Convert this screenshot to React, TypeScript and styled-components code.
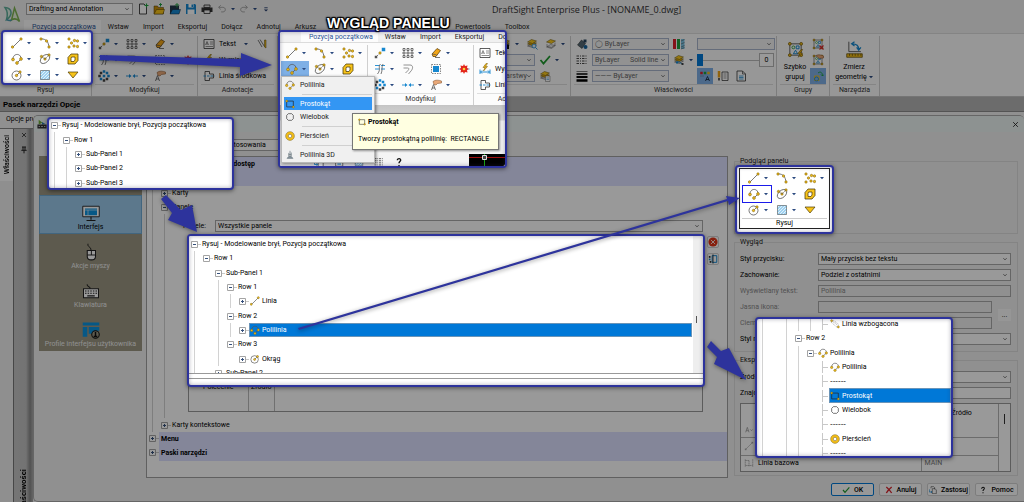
import React from "react";
import styled, { createGlobalStyle, css } from "styled-components";

const GlobalStyle = createGlobalStyle`
  *, *::before, *::after { box-sizing: border-box; }
  body { margin: 0; background: #999; }
  body, button, input, select, table {
    font-family: Roboto, "Open Sans", sans-serif;
    font-size: 7px;
    line-height: 10px;
    color: #000;
  }
  button, input, select { margin: 0; padding: 0; border: 0; background: none; border-radius: 0; }
`;

/* ---------- icons ---------- */

const Svg = styled.svg<{ $size: number }>`
  display: block;
  flex: none;
  width: ${(p) => p.$size}px;
  height: ${(p) => p.$size}px;
`;

const Dot = ({ x, y, r = 2.4 }: { x: number; y: number; r?: number }) => (
  <circle cx={x} cy={y} r={r} fill="#f2bd18" stroke="#7d6210" strokeWidth="1.1" />
);
const Sq = ({ x, y, c = "#1687cf", s = 5 }: { x: number; y: number; c?: string; s?: number }) => (
  <rect x={x - s / 2} y={y - s / 2} width={s} height={s} fill={c} />
);
const ink = { fill: "none", stroke: "#555", strokeWidth: 1.6 } as const;
const sky = { fill: "none", stroke: "#1687cf", strokeWidth: 1.8 } as const;

const stack = (
  <>
    <path d="M3 16l8-4 10 2-8 5z" fill="#c9c9c9" stroke="#555" />
    <path d="M3 12l8-4 10 2-8 5z" fill="#e0a90c" stroke="#5d4a08" />
    <path d="M3 8l8-5 10 3-8 5z" fill="#f7c71e" stroke="#5d4a08" />
  </>
);

const groupBox = (
  <>
    <path d="M4 4h16v16H4z" fill="none" stroke="#555" strokeWidth="1.3" />
    <Dot x={4} y={4} r={2} /><Dot x={20} y={4} r={2} /><Dot x={4} y={20} r={2} /><Dot x={20} y={20} r={2} />
    <circle cx="9" cy="9" r="2" fill="none" stroke="#2d9c3c" strokeWidth="1.3" />
    <path d="M13 7h4v4h-4zM12 13l3 5H9z" {...sky} strokeWidth={1.4} />
  </>
);

const glyphs: Record<string, React.ReactNode> = {
  line: <><path d="M4 20L20 4" {...ink} /><Dot x={3} y={20} /><Dot x={20} y={4} /></>,
  arc: <><path d="M4 4c10-1 15 6 16 16" {...ink} /><Dot x={4} y={4} /><Dot x={15} y={8} /><Dot x={20} y={20} /></>,
  points: <><Dot x={4} y={4} /><Dot x={4} y={20} /><Dot x={9} y={12} /><Dot x={15} y={7} /><Dot x={21} y={8} /><Dot x={14} y={18} /><Dot x={21} y={19} /></>,
  polyline: <><path d="M4 12C4 0 20 0 20 11M20 12l-8 8" {...ink} /><Dot x={4} y={13} r={2.8} /><Dot x={20} y={12} r={2.8} /><Dot x={12} y={20} r={2.8} /></>,
  ellipse: <><ellipse cx="12" cy="12" rx="11" ry="7" transform="rotate(-42 12 12)" {...ink} /><Dot x={12} y={12} /><Dot x={5} y={7} /><Dot x={20} y={4} /><path d="M5 7l7 5 8-8" {...ink} strokeWidth={1} /></>,
  region: <><path d="M8 2h14v13l-6 7H2V9z" fill="#f7c31a" stroke="#4a3a05" strokeWidth="1.5" /><path d="M9 8h7v6l-2 3H8v-6z" fill="#fff" stroke="#4a3a05" strokeWidth="1.5" /></>,
  circle: <><circle cx="11" cy="13" r="9" {...ink} /><path d="M11 13l7-7" {...ink} /><Dot x={11} y={13} /><Dot x={18} y={6} /></>,
  hatch: <><path d="M3 3h18v18H3z" fill="#dff1fc" stroke="#555" strokeWidth="1.3" /><path d="M3 10l7-7M3 16L16 3M4 21L21 4M10 21l11-11M16 21l5-5" stroke="#2a97d8" strokeWidth="1.4" /></>,
  triangle: <path d="M2 6h20L12 18z" fill="#f7c31a" stroke="#4a3a05" strokeWidth="1.4" />,
  rect: <><path d="M4 5h16v14H4z" {...ink} stroke="#222" /><Dot x={4} y={5} /><Dot x={20} y={19} /></>,
  polygon: <path d="M8 4h8l4 4v8l-4 4H8l-4-4V8z" {...ink} stroke="#333" />,
  ring: <><circle cx="12" cy="12" r="7.5" fill="none" stroke="#f2bd18" strokeWidth="6" /><circle cx="12" cy="12" r="10.6" fill="none" stroke="#6a5208" /><circle cx="12" cy="12" r="4.2" fill="#fff" stroke="#6a5208" strokeWidth="1.3" /></>,
  poly3d: <path d="M12 2v14M9 7v9M15 6v10M5 20l4-4h6l4 4zM9 11h6" fill="#8a99a3" stroke="#5d6c76" strokeWidth="1.6" />,
  rich: <><path d="M3 3l18 14M3 8l14 12M8 3l13 10" stroke="#777" strokeWidth="1.2" strokeDasharray="3 2" /><Dot x={4} y={4} /><Dot x={20} y={19} /></>,
  stretch: <><path d="M5 19L19 5" {...ink} stroke="#555" strokeDasharray="5 3" /><Dot x={12} y={12} /><Sq x={4} y={20} c="#555" /><Sq x={19} y={5} s={7} /></>,
  array: <path d="M2 3h4v4H2zM10 3h4v4h-4zM18 3h4v4h-4zM2 10h4v4H2zM10 10h4v4h-4zM18 10h4v4h-4zM2 17h4v4H2zM10 17h4v4h-4zM18 17h4v4h-4z" {...ink} stroke="#444" strokeWidth={1.5} />,
  erase: <><path d="M4 14L14 3l7 4-9 12H6z" fill="#f2a618" stroke="#4a3208" strokeWidth="1.4" /><path d="M4 14l7 1 3 2" {...ink} /><path d="M10 21h10" {...ink} /></>,
  trim: <><path d="M2 5h9M14 5h8M2 12h9M14 12h8" {...sky} /><path d="M13 2C7 8 15 12 7 22M18 2c-4 8 0 11-4 20" {...ink} /></>,
  offset: <path d="M3 4h13c7 0 6 8 2 12l-5 6M3 10h8c4 0 3 3 0 6l-4 4" {...ink} stroke="#777" />,
  copy: <><path d="M3 3h18v18H3z" fill="none" stroke="#555" strokeWidth="1.4" strokeDasharray="3 2" /><path d="M6 6h12v12H6z" fill="#1687cf" /></>,
  explode: <><path d="M0 12h6M18 12h6" {...sky} strokeDasharray="3 2" /><path d="M12 2l2 4 5-1-1 5 4 2-4 2 1 5-5-1-2 4-2-4-5 1 1-5-4-2 4-2-1-5 5 1z" fill="#e3261b" /><circle cx="12" cy="12" r="2.6" fill="#fbd13a" /></>,
  pattern: <><Sq x={12} y={3} /><Sq x={12} y={21} c="#444" /><Sq x={3} y={12} c="#444" /><Sq x={21} y={12} /><Sq x={12} y={12} /><Sq x={6} y={6} c="#444" /><Sq x={18} y={6} /><Sq x={6} y={18} /><Sq x={18} y={18} c="#444" /></>,
  merge: <><path d="M0 12h8M16 12h8" {...sky} /><path d="M6 8l5 4-5 4zM18 8l-5 4 5 4z" fill="#1687cf" /></>,
  edit: <><path d="M6 5c5-4 11-3 17-1v4l-8 1-3 3-4-1z" fill="#e9a878" stroke="#7c4a22" /><path d="M3 22l4-11 4 11M4 18h6" {...ink} /></>,
  text: <><path d="M2 3h20v18H2z" fill="#fff" stroke="#333" strokeWidth="1.6" /><path d="M5 14l3-7 3 7M6 12h4M14 8h6M14 12h6M5 17h15" {...ink} strokeWidth={1.3} /></>,
  dim: <><path d="M14 1L8 9h4l-3 7 8-9h-4l4-6z" fill="#f5b915" stroke="#6a5208" /><path d="M2 13v9M22 13v9M3 18h18M6 15l-3 3 3 3M18 15l3 3-3 3" {...sky} /></>,
  center: <><path d="M4 3h9v5M4 21h9v-5M4 3v18M13 8h8v8h-8" {...ink} stroke="#333" /><path d="M1 12h22" {...sky} strokeDasharray="5 2" /></>,
  pencil: <><path d="M4 4l8 14M8 3l9 14" stroke="#777" strokeWidth="2" /><path d="M17 4v14l3 2V4z" fill="#f2bd18" stroke="#5d4a08" /></>,
  layersPlain: <><path d="M3 18l8-5 10 2-8 6z" fill="#e4e4e4" stroke="#666" /><path d="M3 8l8-5 10 3-8 5z" fill="#f7c71e" stroke="#5d4a08" /><path d="M4 12v5l9 2 7-5v-5" {...ink} strokeWidth={1} /></>,
  layersFind: <>{stack}<circle cx="16" cy="16" r="4" fill="#dff1fc" stroke="#1687cf" strokeWidth="1.6" /><path d="M19 19l4 4" {...sky} /></>,
  layersNode: <>{stack}<path d="M8 16h5l5 4" {...sky} /><Sq x={8} y={17} s={4} /><Sq x={19} y={20} s={4} c="#444" /></>,
  layersPage: <>{stack}<path d="M13 12h9v11h-9z" fill="#fff" stroke="#666" /><path d="M15 16h5M15 19h5" stroke="#1687cf" /></>,
  layersDark: <>{stack}<path d="M9 13h11v9H9z" fill="#111" /></>,
  check: <path d="M3 12l6 7L22 4" fill="none" stroke="#1e9a2e" strokeWidth="3.6" />,
  fill: <><path d="M3 14l8-10 8 7-7 10z" fill="#556a75" stroke="#222" /><circle cx="19" cy="18" r="4" fill="#16639c" /><Sq x={18} y={6} c="#28445c" s={6} /></>,
  dashes: <path d="M1 4h22M1 9h22M1 14h22M1 19h22" stroke="#333" strokeWidth="1.8" strokeDasharray="5 2 2 2" />,
  weights: <><path d="M1 3h22" stroke="#000" /><path d="M1 8h22" stroke="#000" strokeWidth="3" /><path d="M1 14h22" stroke="#000" strokeWidth="4" /><path d="M1 21h22" stroke="#000" strokeWidth="5" /></>,
  swatches: <><path d="M0 2h6v20H0z" fill="#dc1f2c" /><path d="M8 2h6v20H8z" fill="#1ea03e" /><path d="M16 2h7v20h-7z" fill="#7ec8e8" /><path d="M16 6l7-3M16 12l7-3M16 18l7-3M16 22l7-3" stroke="#444" /></>,
  colorA: <><Sq x={5} y={6} c="#dc1f2c" /><Sq x={12} y={6} c="#1ea03e" /><Sq x={19} y={6} c="#f2bd18" /><path d="M13 22l4-9 4 9M14 19h6" {...ink} stroke="#123" /><path d="M3 12h7" {...ink} strokeDasharray="2 2" /></>,
  brush: <><path d="M4 2v13" stroke="#f2a618" strokeWidth="5" /><path d="M4 16v5" stroke="#333" strokeWidth="3" /><path d="M10 4h12v17H10z" fill="#fff" stroke="#333" strokeWidth="1.5" /><path d="M13 8h6M13 12h6M13 16h6" stroke="#333" /></>,
  page: <><path d="M4 2h11l6 6v14H4z" fill="#fff" stroke="#333" strokeWidth="1.6" /><path d="M15 2v6h6" {...ink} /><path d="M8 12h9M8 15h9M8 18h9" stroke="#1687cf" strokeWidth="1.5" /></>,
  group: <>{groupBox}<path d="M20 12l-5 6h3l-2 5 6-6h-3l3-5z" fill="#f5b915" stroke="#6a5208" strokeWidth=".8" /></>,
  ungroup: <>{groupBox}<path d="M15 15l8 8M23 15l-8 8" stroke="#d9242c" strokeWidth="2.2" /></>,
  groupEdit: <>{groupBox}<path d="M8 3c5-3 10-1 15 1v4l-9 1z" fill="#e9a878" stroke="#7c4a22" /></>,
  groupPick: <><path d="M5 12h9v9H5z" fill="none" stroke="#f2bd18" strokeWidth="2" /><circle cx="9" cy="18" r="4" fill="none" stroke="#1687cf" strokeWidth="1.6" /><path d="M12 6c5-4 9-1 9 6M18 9l3 3 3-3" fill="none" stroke="#1ea03e" strokeWidth="1.8" /></>,
  measure: <><path d="M4 1v14h17" {...ink} strokeWidth={1.3} /><path d="M9 4c6 0 9 3 9 8M12 1L8 4l4 3M15 9l3 4 3-4" {...sky} /><path d="M1 18h22v5H1z" fill="#f2bd18" stroke="#5d4a08" /><path d="M5 18v3M9 18v3M13 18v3M17 18v3M21 18v3" stroke="#5d4a08" /></>,
  newFile: <><path d="M5 2h9l5 5v15H5z" fill="#fff" stroke="#333" strokeWidth="1.8" /><path d="M19 1v8M15 5h8" stroke="#1ea03e" strokeWidth="2.2" /></>,
  open: <><path d="M2 6h7l2 3h10v13H2z" fill="#c98f0a" stroke="#4a3a05" /><path d="M2 22l5-9h16l-3 9z" fill="#f7c31a" stroke="#4a3a05" /><path d="M15 7V1M12 4l3-3 3 3" stroke="#1ea03e" strokeWidth="2" fill="none" /></>,
  openBlue: <><path d="M2 5h18v17H2z" fill="#22384a" /><path d="M2 22l5-9h16l-3 9z" fill="#1687cf" stroke="#123" /><path d="M16 9V2M12 5l4-4 4 4" stroke="#1ea03e" strokeWidth="2" fill="none" /></>,
  save: <><path d="M2 2h18l2 2v18H2z" fill="#1687cf" /><path d="M7 2h10v7H7zM5 13h14v9H5z" fill="#fff" /><path d="M13 3h3v5h-3z" fill="#1687cf" /></>,
  print: <><path d="M6 4h12v5H6z" fill="#ddd" stroke="#222" strokeWidth="1.5" /><path d="M1 9h22v9H1z" fill="#333" /><path d="M6 14h12v7H6z" fill="#eee" stroke="#222" strokeWidth="1.5" /></>,
  undo: <path d="M9 3L4 8l5 5M4 8h10c8 0 8 11 0 11h-4" fill="none" stroke="#999" strokeWidth="2" />,
  redo: <path d="M15 3l5 5-5 5M20 8H10c-8 0-8 11 0 11h4" fill="none" stroke="#999" strokeWidth="2" />,
  more: <><path d="M8 9h8" stroke="#223a6a" strokeWidth="2" /><path d="M7 13h10l-5 5z" fill="#223a6a" /></>,
  appSmall: <><path d="M4 2l9 7-9 4z" fill="#6fae3a" /><path d="M12 7l8 5-8 2z" fill="#2d7cae" /><path d="M1 13h22v10H1z" fill="#333" /><path d="M4 18h3M10 18h4M17 18h3" stroke="#ddd" strokeWidth="2" /></>,
  monitor: <><path d="M1 3h22v14H1z" fill="#fff" stroke="#222" strokeWidth="1.2" /><path d="M4 6h16v9H4z" fill="#0a93e0" /><path d="M4 8h16M8 8v7" stroke="#fff" strokeWidth=".8" /><path d="M12 17v4M6 22h12" stroke="#222" strokeWidth="1.5" /></>,
  mouse: <><path d="M7 10h11v8c0 6-11 6-11 0z" fill="#fff" stroke="#222" strokeWidth="1.4" /><path d="M12.500 10v6M7 16h11M12 10C12 4 7 6 8 1" fill="none" stroke="#222" strokeWidth="1.3" /></>,
  keyboard: <><path d="M2 9h20v12H2z" fill="#fff" stroke="#222" strokeWidth="1.4" /><path d="M4 12h16M4 15h16" stroke="#222" strokeWidth="1.6" strokeDasharray="2 1.500" /><path d="M7 18.500h10M11 9c0-4-5-2-4-6" fill="none" stroke="#222" strokeWidth="1.4" /></>,
  profile: <><path d="M1 2h22v4H1zM1 8h6v13H1zM9 8h14v5c-6 0-8 2-9 4H9z" fill="#0a93e0" /><circle cx="18" cy="18" r="5" fill="#9b9682" stroke="#111" strokeWidth="1.4" /><path d="M18 14.500v5M15.500 20.500h5" stroke="#111" strokeWidth="2" /></>,
  remove: <><circle cx="12" cy="12" r="11" fill="#e03418" /><path d="M7 7l10 10M17 7L7 17" stroke="#fff" strokeWidth="2" /></>,
  rename: <><path d="M10 4h11v16H10z" fill="none" stroke="#1687cf" strokeWidth="2.4" /><path d="M12 1v22" stroke="#222" strokeWidth="2" /><Sq x={4} y={7} c="#222" s={4} /><Sq x={4} y={13} c="#1687cf" s={4} /><Sq x={6} y={19} c="#222" s={4} /></>,
  close: <path d="M4 4l16 16M20 4L4 20" stroke="#222" strokeWidth="3" />,
  pin: <path d="M6 3h12M9 3v9M15 3v9M4 13h16M12 13v9" fill="none" stroke="#222" strokeWidth="3" />,
  cancel: <path d="M4 3c5 4 12 12 16 18M20 3C14 8 8 14 4 21" fill="none" stroke="#d9242c" strokeWidth="4" />,
  apply: <><path d="M6 7V2h8l3 3v5M10 8h8l4 4v11H10z" fill="#fff" stroke="#333" strokeWidth="1.6" /><path d="M1 10v8h8M6 15l3 3-3 3" fill="none" stroke="#1687cf" strokeWidth="2" /></>,
  help: <path d="M8 8c0-6 9-5 8 0-1 3-4 3-4 7M12 19v3" fill="none" stroke="#111" strokeWidth="3.2" />,
  letter: <path d="M4 20L8 8l4 12M5 16h6M15 13l3 3 3-3" fill="none" stroke="#999" strokeWidth="1.8" />,
  baseline: <path d="M3 3v18M12 6v15M21 3v18M3 6h9M3 18h18" fill="none" stroke="#999" strokeWidth="1.6" strokeDasharray="4 1" />,
  faintLine: <><path d="M5 19L19 5" stroke="#aaa" strokeWidth="1.6" /><Sq x={4} y={20} c="#aaa" s={4} /><Sq x={20} y={4} c="#aaa" s={4} /></>,
  chevron: <path d="M5 8l7 8 7-8" fill="none" stroke="#555" strokeWidth="2.6" />,
};

const Icon = ({ name, size = 12 }: { name: string; size?: number }) => (
  <Svg $size={size} viewBox="0 0 24 24" aria-hidden="true">{glyphs[name]}</Svg>
);

const Caret = () => (
  <Svg $size={4} viewBox="0 0 8 8" aria-hidden="true"><path d="M0 2h8L4 6.500z" fill="#2b4a80" /></Svg>
);

/* ---------- shared controls ---------- */

const SelectBox = styled.span<{ $w?: number; $tint?: boolean; $muted?: boolean }>`
  display: grid;
  grid-template-columns: minmax(0, 1fr) 10px;
  align-items: center;
  height: 12px;
  width: ${(p) => (p.$w ? `${p.$w}px` : "100%")};
  border: 1px solid ${(p) => (p.$tint ? "#a9b4cc" : "#a8a8a8")};
  background: ${(p) => (p.$muted ? "#f4f4f4" : "#fff")};
  select {
    grid-area: 1 / 1 / 2 / 3;
    appearance: none;
    width: 100%;
    height: 10px;
    padding-left: 2px;
    color: ${(p) => (p.$muted ? "#666" : "#000")};
    opacity: 1;
  }
  svg { grid-area: 1 / 2; justify-self: center; pointer-events: none; }
`;

type SelectProps = { label: string; value: string; w?: number; tint?: boolean; muted?: boolean; id?: string };
const Select = ({ label, value, w, tint, muted, id }: SelectProps) => (
  <SelectBox $w={w} $tint={tint} $muted={muted}>
    <select aria-label={label} id={id} defaultValue={value}><option>{value}</option></select>
    <Icon name="chevron" size={6} />
  </SelectBox>
);

type Hot = "fill" | "open" | "frame";
const ToolButton = styled.button<{ $hot?: Hot }>`
  display: flex;
  align-items: center;
  gap: 4px;
  height: 16px;
  padding: 0 2px;
  white-space: nowrap;
  ${(p) => (p.$hot === "fill" || p.$hot === "open") && css`background: #7fb0e6;`}
  ${(p) => (p.$hot === "open" || p.$hot === "frame") && css`width: 28px; margin-left: -3px; padding-left: 5px;`}
  ${(p) => p.$hot === "frame" && css`box-shadow: 0 0 0 1px #1b1bea;`}
`;

type ToolProps = { icon: string; caret?: boolean; text?: string; hot?: Hot };
const Tool = ({ icon, caret, text, hot }: ToolProps) => (
  <ToolButton type="button" aria-label={text ?? icon} $hot={hot}>
    <Icon name={icon} />{text}{caret && <Caret />}
  </ToolButton>
);

const ToolGrid = styled.div<{ $cols: number }>`
  display: grid;
  grid-template-columns: repeat(${(p) => p.$cols}, 28px);
  grid-auto-rows: 16px;
  justify-items: start;
`;

const DrawTools = ({ active }: { active?: Hot }) => (
  <ToolGrid $cols={3}>
    <Tool icon="line" caret /><Tool icon="arc" caret /><Tool icon="points" caret />
    <Tool icon="polyline" caret hot={active} /><Tool icon="ellipse" caret /><Tool icon="region" />
    <Tool icon="circle" caret /><Tool icon="hatch" caret /><Tool icon="triangle" />
  </ToolGrid>
);

const ModifyTools = () => (
  <ToolGrid $cols={4}>
    <Tool icon="stretch" caret /><Tool icon="array" caret /><Tool icon="erase" caret /><span />
    <Tool icon="trim" caret /><Tool icon="offset" /><Tool icon="copy" /><Tool icon="explode" />
    <Tool icon="pattern" caret /><Tool icon="merge" caret /><Tool icon="edit" caret />
  </ToolGrid>
);

const Column = styled.div`display: flex; flex-direction: column; align-items: flex-start;`;
const Line = styled.div<{ $gap?: number }>`
  display: flex;
  align-items: center;
  height: 16px;
  gap: ${(p) => p.$gap ?? 0}px;
`;

const NoteTools = () => (
  <Column>
    <Line $gap={6}><Tool icon="text" text="Tekst" /><Caret /><Tool icon="pencil" /></Line>
    <Tool icon="dim" text="Wymiar" />
    <Tool icon="center" text="Linia środkowa" />
  </Column>
);

/* ---------- window top ---------- */

const Desktop = styled.div`
  position: relative;
  display: flex;
  flex-direction: column;
  height: 100vh;
  overflow: hidden;
  background: #f0f0f0;
`;

const TitleBar = styled.header`
  display: flex;
  align-items: center;
  height: 20px;
  padding: 0 0 3px 26px;
  gap: 4px;
`;
const Mark = styled.div`position: absolute; left: 3px; top: 5px;`;
const DocTitle = styled.h1`
  margin: 0 0 0 217px;
  font-family: "Open Sans", sans-serif;
  font-size: 9px;
  line-height: 12px;
  font-weight: 400;
  color: #333;
  white-space: nowrap;
  padding-top: 3px;
`;

const TabRow = styled.nav<{ $inset?: number; $low?: boolean }>`
  flex: none;
  display: flex;
  height: ${(p) => (p.$low ? 10 : 13)}px;
  padding-left: ${(p) => p.$inset ?? 24}px;
  white-space: nowrap;
`;
const Tab = styled.button<{ $on?: boolean }>`
  flex: none;
  padding: ${(p) => (p.$on ? "0 5px 0 8px" : "0 7px")};
  line-height: 10px;
  color: ${(p) => (p.$on ? "#2c5596" : "#222")};
  background: ${(p) => (p.$on ? "#fcfcfc" : "transparent")};
`;
const TabGap = styled.span`flex: none; width: 125px;`;

const RibbonBar = styled.section`
  flex: none;
  display: flex;
  height: 64px;
  padding-top: 2px;
  background: #fcfcfc;
  border-top: 1px solid #dcdcdc;
  border-bottom: 1px solid #c4c4c4;
`;
const Group = styled.div<{ $w: number }>`
  flex: none;
  display: flex;
  flex-direction: column;
  justify-content: space-between;
  width: ${(p) => p.$w}px;
  padding: 0 3px;
  border-right: 1px solid #cfcfcf;
`;
const GroupBody = styled.div<{ $end?: boolean; $gap?: number; $pad?: number }>`
  display: flex;
  justify-content: ${(p) => (p.$end ? "flex-end" : "flex-start")};
  gap: ${(p) => p.$gap ?? 0}px;
  height: 48px;
  padding-left: ${(p) => p.$pad ?? 0}px;
`;
const GroupName = styled.div`
  border-top: 1px solid #dedede;
  text-align: center;
  height: 12px;
  color: #333;
`;
const BigButton = styled.button`
  display: flex;
  flex-direction: column;
  align-items: center;
  padding-top: 5px;
  width: 36px;
  > svg { margin-bottom: 4px; }
`;
const Inline = styled.span`display: flex; align-items: center; gap: 2px;`;
const LevelSlider = styled.input`
  appearance: none;
  width: 62px;
  height: 12px;
  background: linear-gradient(#bbb, #bbb) center / 100% 1px no-repeat;
  &::-webkit-slider-thumb { appearance: none; width: 6px; height: 12px; background: #0078d7; }
`;
const LevelValue = styled.output`
  width: 15px;
  height: 14px;
  border: 1px solid #b4b4b4;
  background: #fff;
  text-align: center;
  line-height: 12px;
`;

const Ribbon = () => (
  <RibbonBar>
    <Group $w={92}><GroupBody /><GroupName>Rysuj</GroupName></Group>
    <Group $w={106}><GroupBody $pad={1}><ModifyTools /></GroupBody><GroupName>Modyfikuj</GroupName></Group>
    <Group $w={80}><GroupBody><NoteTools /></GroupBody><GroupName>Adnotacje</GroupName></Group>
    <Group $w={293}>
      <GroupBody $end>
        <Column>
          <Line $gap={3}><Tool icon="layersDark" caret /><Tool icon="layersFind" /><Tool icon="layersPlain" caret /></Line>
          <Line $gap={2}><Select label="Stan warstwy" value="" w={38} tint muted /><Tool icon="check" caret /></Line>
          <Line $gap={2}><Select label="Warstwa" value="Warstwy" w={38} tint muted /><Tool icon="layersPage" /></Line>
        </Column>
      </GroupBody>
      <GroupName>Warstwy</GroupName>
    </Group>
    <Group $w={206}>
      <GroupBody $gap={2}>
        <Column>
          <Line $gap={2}><Tool icon="fill" /><Select label="Kolor" value="◯  ByLayer" w={77} tint muted /></Line>
          <Line $gap={2}><Tool icon="dashes" /><Select label="Styl linii" value={"ByLayer\u00a0\u00a0\u00a0\u00a0\u00a0\u00a0Solid line"} w={77} tint muted /></Line>
          <Line $gap={2}><Tool icon="weights" /><Select label="Szerokość linii" value="——— ByLayer" w={77} tint muted /></Line>
        </Column>
        <Column><Tool icon="swatches" /><Tool icon="layersNode" caret /></Column>
        <Column>
          <Line><Select label="Styl wydruku" value="" w={78} tint muted /></Line>
          <Line><LevelSlider type="range" aria-label="Przezroczystość" defaultValue={0} /><LevelValue>0</LevelValue></Line>
          <Line $gap={2}><Tool icon="colorA" hot="fill" /><Tool icon="brush" /><Tool icon="page" /></Line>
        </Column>
      </GroupBody>
      <GroupName>Właściwości</GroupName>
    </Group>
    <Group $w={53}>
      <GroupBody>
        <BigButton type="button"><Icon name="group" size={17} />Szybko<br />grupuj</BigButton>
        <Column><Tool icon="ungroup" /><Tool icon="groupEdit" /><Tool icon="groupPick" hot="fill" /></Column>
      </GroupBody>
      <GroupName>Grupy</GroupName>
    </Group>
    <Group $w={50}>
      <GroupBody $pad={3}>
        <BigButton type="button"><Icon name="measure" size={17} />Zmierz<Inline>geometrię <Caret /></Inline></BigButton>
      </GroupBody>
      <GroupName>Narzędzia</GroupName>
    </Group>
  </RibbonBar>
);

const OptionsHeading = styled.h2`
  flex: none;
  margin: 0;
  height: 15px;
  padding-left: 3px;
  background: #b4b4b4;
  border-bottom: 1px solid #8c8c8c;
  font-size: 8px;
  line-height: 15px;
  font-weight: 700;
`;

/* ---------- workspace ---------- */

const Workspace = styled.div`
  flex: 1;
  min-height: 0;
  display: grid;
  grid-template-columns: 33px minmax(0, 1fr);
`;
const Dock = styled.aside`display: flex; flex-direction: column; min-height: 0;`;
const DockHint = styled.div`height: 16px; padding: 2px 0 0 6px; white-space: nowrap; overflow: hidden;`;
const DockBody = styled.div`flex: 1; display: flex; min-height: 0; border-top: 1px solid #888;`;
const DockTabs = styled.div`width: 14px; border-right: 1px solid #777; background: #eee;`;
const Upright = styled.span`
  writing-mode: vertical-rl;
  transform: rotate(180deg);
  font-weight: 700;
  line-height: 12px;
`;
const DockTab = styled.button`
  width: 13px;
  height: 52px;
  background: #fcfcfc;
  display: flex;
  align-items: center;
  justify-content: center;
  span { font-weight: 500; font-size: 7px; }
`;
const DockStrip = styled.div`
  width: 19px;
  display: flex;
  flex-direction: column;
  align-items: center;
  gap: 8px;
  padding-top: 3px;
  overflow: hidden;
  background: linear-gradient(90deg, #c4c4c4 0, #c0c0c0 12px, #888 16px, #aaa 19px);
  > span { margin: auto 0 -12px; font-size: 8px; }
`;

const Dialog = styled.section`
  margin-top: 3px;
  border: 1px solid #aaa;
  border-right: 0;
  border-radius: 5px 5px 0 5px;
  background: #f0f0f0;
  overflow: hidden;
`;
const DialogHead = styled.header`
  display: flex;
  justify-content: space-between;
  align-items: center;
  height: 16px;
  padding: 0 5px 0 3px;
  background: #ecf4f2;
`;
const DialogBody = styled.div`
  display: grid;
  grid-template-columns: 103px minmax(0, 1fr) 284px;
  column-gap: 4px;
  padding: 0 6px 0 5px;
`;
const SideNav = styled.nav`
  display: flex;
  flex-direction: column;
  margin-top: 24px;
  height: 195px;
  background: #9b9682;
`;
const NavItem = styled.button<{ $on?: boolean }>`
  display: flex;
  flex-direction: column;
  align-items: center;
  justify-content: flex-end;
  height: 39px;
  padding-bottom: 1px;
  color: ${(p) => (p.$on ? "#000" : "#eee")};
  background: ${(p) => (p.$on ? "#99c8ea" : "transparent")};
  border: 1px solid ${(p) => (p.$on ? "#6ea9d2" : "transparent")};
`;

const MainCol = styled.main`padding: 6px 2px 0 0; min-width: 0;`;
const FileRow = styled.div`
  display: flex;
  align-items: center;
  gap: 6px;
  height: 14px;
  margin-bottom: 4px;
  padding-left: 9px;
`;
const TreeBox = styled.div`
  height: 322px;
  border: 1px solid #a0a0a0;
  background: #fff;
`;
const Section = styled.div<{ $h: number }>`
  display: grid;
  grid-template-columns: 12px minmax(0, 1fr);
  height: ${(p) => p.$h}px;
`;
const Band = styled.strong`background: #dce0ff; padding: 2px 2px; font-weight: 700;`;

/* ---------- tree ---------- */

const Guide = styled.span<{ $on?: boolean }>`
  flex: none;
  width: 12px;
  align-self: stretch;
  background: ${(p) => (p.$on ? "linear-gradient(#d2d2d2, #d2d2d2) 5px 0 / 1px 100% no-repeat" : "none")};
`;
const Row = styled.div<{ $fluid?: boolean }>`
  display: flex;
  align-items: center;
  white-space: nowrap;
  ${(p) => (p.$fluid ? css`flex: 1;` : css`height: 14px;`)}
`;
const RowLabel = styled.span<{ $on?: boolean; $dash?: boolean }>`
  display: flex;
  align-items: center;
  align-self: stretch;
  gap: 2px;
  padding-left: 1px;
  ${(p) => p.$on && css`flex: 1; color: #fff; background: #0078d7; border: 1px solid #6a94b8; padding-left: 0;`}
  ${(p) => p.$dash && css`font-family: "Liberation Sans", sans-serif; font-size: 8px;`}
`;

const Expander = ({ state }: { state: "+" | "-" | "." }) => (
  <Svg $size={12} viewBox="0 0 12 12" aria-hidden="true">
    {state === "." ? (
      <path d="M5.500 0v12M6 6.500h5" stroke="#c8c8c8" />
    ) : (
      <>
        <path d="M9 6.500h3" stroke="#c8c8c8" />
        <path d="M2.500 3.500h6v6h-6z" fill="#fff" stroke="#a4a4a4" />
        <path d={state === "+" ? "M4 6.500h3M5.500 5v3" : "M4 6.500h3"} stroke="#35507c" />
      </>
    )}
  </Svg>
);

type Node = { g?: string; s: "+" | "-" | "."; t: string; icon?: string; on?: boolean };
const TreeRow = ({ g = "", s, t, icon, on, fluid }: Node & { fluid?: boolean }) => (
  <Row $fluid={fluid}>
    {[...g].map((c, i) => <Guide key={i} $on={c === "|"} />)}
    <Expander state={s} />
    <RowLabel $on={on} $dash={t.startsWith("--")}>{icon && <Icon name={icon} size={10} />}{t}</RowLabel>
  </Row>
);

const PanelArea = styled.div`display: flex; height: 204px;`;
const PanelContent = styled.div`flex: 1; min-width: 0; margin: 6px 24px 0 0;`;
const PanelPick = styled.label`
  display: grid;
  grid-template-columns: 32px minmax(0, 1fr);
  align-items: center;
  margin-bottom: 4px;
`;
const ListFrame = styled.div`
  display: flex;
  flex-direction: column;
  justify-content: flex-end;
  height: 176px;
  margin-left: 5px;
  border: 1px solid #999;
`;
const CommandTable = styled.table`
  align-self: flex-start;
  table-layout: fixed;
  width: 86px;
  height: 32px;
  border-collapse: collapse;
  th { font-weight: 400; height: 16px; padding: 0; border-right: 1px solid #bbb; }
  td { padding: 0; border-right: 1px solid #bbb; }
  th:first-child { width: 59px; }
`;
const SideButtons = styled.div`
  display: flex;
  flex-direction: column;
  gap: 5px;
  width: 12px;
  margin: 22px 8px 0 -20px;
`;
const SquareButton = styled.button`
  display: grid;
  place-items: center;
  width: 12px;
  height: 12px;
  border: 1px solid #d0d0d0;
  border-radius: 2px;
  background: #fdfdfd;
`;

/* ---------- right column ---------- */

const RightCol = styled.div`padding-top: 24px;`;
const Fieldset = styled.fieldset<{ $h: number }>`
  height: ${(p) => p.$h}px;
  margin: 0 0 3px;
  padding: 4px 6px 0 5px;
  border: 1px solid #dcdcdc;
  legend { padding: 0; color: #222; }
`;
const Field = styled.div<{ $off?: boolean; $narrow?: boolean }>`
  display: grid;
  grid-template-columns: 78px minmax(0, 1fr) ${(p) => (p.$narrow ? "19px" : "")};
  grid-auto-rows: 16px;
  align-items: center;
  white-space: nowrap;
  label { color: ${(p) => (p.$off ? "#888" : "#000")}; }
  button {
    grid-area: 1 / 3 / 3 / 4;
    justify-self: end;
    width: 13px;
    height: 12px;
    background: #fafafa;
    line-height: 8px;
  }
`;
const TextBox = styled.input<{ $off?: boolean }>`
  width: 100%;
  height: 12px;
  padding-left: 2px;
  border: 1px solid #a8a8a8;
  background: ${(p) => (p.$off ? "#f0f0f0" : "#fff")};
  color: ${(p) => (p.$off ? "#888" : "#000")};
`;
const Explorer = styled.div`
  display: grid;
  grid-template-columns: minmax(0, 1fr) 11px;
  margin-top: 2px;
  border: 1px solid #999;
  background: #fff;
`;
const ExplorerTable = styled.table`
  width: 100%;
  border-collapse: collapse;
  table-layout: fixed;
  th, td { padding: 0 3px; text-align: left; font-weight: 400; border: solid #b4b4b4; border-width: 0 1px 1px 0; }
  th { height: 18px; border-bottom: 0; }
  th:first-child { width: 180px; }
  th:last-child { padding-left: 30px; }
  tr:last-child td { border-bottom: 0; }
  td:last-child { color: #777; }
`;
const Cell = styled.span`display: flex; align-items: center; gap: 4px;`;
const Tall = styled.tr<{ $h: number }>`height: ${(p) => p.$h}px;`;
const Thumb = styled.span`justify-self: center; width: 1px; height: 10px; margin-top: 10px; background: #333;`;

const Footer = styled.footer`
  display: flex;
  justify-content: flex-end;
  gap: 5px;
  padding: 4px 6px 0 0;
`;
const ActionButton = styled.button<{ $primary?: boolean }>`
  display: flex;
  align-items: center;
  justify-content: center;
  gap: 4px;
  width: 43px;
  height: 13px;
  border: 1px solid ${(p) => (p.$primary ? "#0078d7" : "#d0d0d0")};
  border-radius: 2px;
  background: #fdfdfd;
  font-weight: 500;
`;

const OptionsDialog = () => (
  <Dialog role="dialog" aria-label="Opcje">
    <DialogHead><Icon name="appSmall" size={10} /><Icon name="close" size={7} /></DialogHead>
    <DialogBody>
      <SideNav>
        <NavItem type="button">Położenia</NavItem>
        <NavItem type="button" $on><Icon name="monitor" size={18} />Interfejs</NavItem>
        <NavItem type="button"><Icon name="mouse" size={18} />Akcje myszy</NavItem>
        <NavItem type="button"><Icon name="keyboard" size={18} />Klawiatura</NavItem>
        <NavItem type="button"><Icon name="profile" size={18} />Profile interfejsu użytkownika</NavItem>
      </SideNav>
      <MainCol>
        <FileRow>
          <label htmlFor="cfg">Plik:</label>
          <Select label="Plik dostosowania" id="cfg" value="Domyślny plik dostosowania" w={290} />
        </FileRow>
        <TreeBox>
          <Section $h={29}><Expander state="-" /><Band>Pasek narzędzi Szybki dostęp</Band></Section>
          <TreeRow g="|" s="+" t="Karty" />
          <TreeRow g="|" s="-" t="Panele" />
          <PanelArea>
            <Guide $on /><Guide $on /><Guide />
            <PanelContent>
              <PanelPick><span>Panele:</span><Select label="Panele" value="Wszystkie panele" /></PanelPick>
              <ListFrame>
                <CommandTable>
                  <thead><tr><th>Polecenie</th><th>Źródło</th></tr></thead>
                  <tbody><tr><td /><td /></tr></tbody>
                </CommandTable>
              </ListFrame>
            </PanelContent>
            <SideButtons>
              <SquareButton type="button" aria-label="Usuń"><Icon name="remove" size={10} /></SquareButton>
              <SquareButton type="button" aria-label="Zmień nazwę"><Icon name="rename" size={10} /></SquareButton>
            </SideButtons>
          </PanelArea>
          <TreeRow g="|" s="+" t="Karty kontekstowe" />
          <Section $h={14}><Expander state="+" /><Band>Menu</Band></Section>
          <Section $h={15}><Expander state="+" /><Band>Paski narzędzi</Band></Section>
        </TreeBox>
      </MainCol>
      <RightCol>
        <Fieldset $h={78}><legend>Podgląd panelu</legend></Fieldset>
        <Fieldset $h={115}>
          <legend>Wygląd</legend>
          <Field><label htmlFor="style">Styl przycisku:</label><Select id="style" label="Styl przycisku" value="Mały przycisk bez tekstu" /></Field>
          <Field><label htmlFor="behave">Zachowanie:</label><Select id="behave" label="Zachowanie" value="Podziel z ostatnimi" /></Field>
          <Field $off><label htmlFor="shown">Wyświetlany tekst:</label><TextBox id="shown" $off defaultValue="Polilinia" /></Field>
          <Field $off $narrow>
            <label htmlFor="light">Jasna ikona:</label><TextBox id="light" $off />
            <button type="button">...</button>
            <label htmlFor="dark">Ciemna ikona:</label><TextBox id="dark" $off />
          </Field>
          <Field><label htmlFor="menu">Styl menu:</label><Select id="menu" label="Styl menu" value="" /></Field>
        </Fieldset>
        <Fieldset $h={121}>
          <legend>Eksplorator poleceń</legend>
          <Field><label htmlFor="src">Źródło:</label><Select id="src" label="Źródło" value="" /></Field>
          <Field><label htmlFor="find">Znajdź:</label><TextBox id="find" /></Field>
          <Explorer>
            <ExplorerTable>
              <thead><tr><th aria-label="Polecenie" /><th>Źródło</th></tr></thead>
              <tbody>
                <Tall $h={15}><td><Icon name="letter" size={10} /></td><td /></Tall>
                <Tall $h={18}><td><Icon name="faintLine" size={10} /></td><td /></Tall>
                <Tall $h={16}><td><Cell><Icon name="baseline" size={10} />Linia bazowa</Cell></td><td>MAIN</td></Tall>
              </tbody>
            </ExplorerTable>
            <Thumb />
          </Explorer>
        </Fieldset>
      </RightCol>
    </DialogBody>
    <Footer>
      <ActionButton type="button" $primary><Icon name="check" size={8} />OK</ActionButton>
      <ActionButton type="button"><Icon name="cancel" size={8} />Anuluj</ActionButton>
      <ActionButton type="button"><Icon name="apply" size={8} />Zastosuj</ActionButton>
      <ActionButton type="button"><Icon name="help" size={8} />Pomoc</ActionButton>
    </Footer>
  </Dialog>
);

/* ---------- highlighted callouts over the dimmed window ---------- */

const Shade = styled.div`position: absolute; inset: 0; background: rgba(0, 0, 0, 0.4);`;

const Callout = styled.section<{ $x: number; $y: number; $w: number; $h: number }>`
  position: absolute;
  left: ${(p) => p.$x}px;
  top: ${(p) => p.$y}px;
  width: ${(p) => p.$w}px;
  height: ${(p) => p.$h}px;
  border: 2px solid #2d339c;
  border-radius: 4px;
  background: #fff;
  overflow: hidden;
  box-shadow: 0 1px 4px rgba(0, 0, 0, 0.5);
  &::after {
    content: "";
    position: absolute;
    inset: 0;
    pointer-events: none;
    box-shadow: inset 0 0 4px rgba(40, 40, 70, 0.4);
  }
`;
const Pad = styled.div`padding: 3px 0 0 6px;`;
const Rows = styled.div<{ $h: number; $up?: number }>`
  display: flex;
  flex-direction: column;
  height: ${(p) => p.$h}px;
  margin-top: ${(p) => -(p.$up ?? 0)}px;
`;
const TreeView = styled.div`
  height: 138px;
  padding: 1px 11px 0 0;
  overflow: hidden;
  border-bottom: 1px solid #999;
  background: linear-gradient(270deg, #eee 10px, #fff 10px);
`;
const TreeFoot = styled.div`height: 5px; border-bottom: 1px solid #999;`;
const ScrollMark = styled.span`position: absolute; right: 6px; top: 80px; width: 1px; height: 7px; background: #555;`;

const Preview = styled.div`
  margin: 1px 2px 2px;
  height: 61px;
  border: 1px solid #222;
  padding: 1px 2px 0;
  > div:first-child { padding-left: 4px; }
`;
const PreviewName = styled.div`border-top: 1px solid #ccc; text-align: center; line-height: 8px;`;

const Heading = styled.h2`
  position: absolute;
  left: 327px;
  top: 15px;
  margin: 0;
  font-family: "Liberation Sans", sans-serif;
  font-size: 14px;
  line-height: 16px;
  font-weight: 700;
  color: #fff;
  white-space: nowrap;
  text-shadow: 1px 1px 1px #000, -1px -1px 1px #000, 1px -1px 1px #000, -1px 1px 1px #000, 0 0 2px #000, 0 0 3px #000;
`;

const Menu = styled.div`
  position: absolute;
  left: 1px;
  top: 44px;
  width: 94px;
  height: 87px;
  padding: 1px 2px;
  background: #f0f0f0;
  border: 1px solid #b8b8b8;
  box-shadow: 1px 1px 3px rgba(0, 0, 0, 0.5);
  z-index: 1;
`;
const MenuItem = styled.button<{ $on?: boolean }>`
  display: flex;
  align-items: center;
  gap: 5px;
  width: 100%;
  height: 13px;
  padding-left: 1px;
  color: ${(p) => (p.$on ? "#fff" : "#222")};
  background: ${(p) => (p.$on ? "#3396f3" : "none")};
`;
const Rule = styled.hr`margin: 3px 0 2px 18px; border: 0; border-top: 1px solid #d0d0d0;`;
const Tip = styled.div`
  position: absolute;
  left: 72px;
  top: 81px;
  width: 147px;
  height: 37px;
  padding: 2px 5px;
  background: #ffffe1;
  border: 1px solid #767676;
  box-shadow: 1px 1px 2px rgba(0, 0, 0, 0.4);
  white-space: nowrap;
  z-index: 2;
  strong { display: flex; align-items: center; gap: 2px; height: 12px; margin-bottom: 6px; }
`;
const Clip = styled.div`overflow: hidden; display: flex; flex-direction: column; height: 100%; background: #f0f0f0;`;
const BackArea = styled.div`
  flex: 1;
  display: grid;
  grid-template-columns: 189px 1fr;
  align-items: end;
  background: linear-gradient(#c6c6c6 0, #d6d6d6 14px, #f4f4f4 15px);
`;
const Buttons = styled.div`display: flex; gap: 10px; padding: 0 0 0 34px; height: 9px;`;
const Canvas = styled.svg`display: block; width: 100%; height: 12px; background: #000;`;

const Arrows = styled.svg`
  position: absolute;
  left: 0;
  top: 0;
  width: 1024px;
  height: 502px;
  pointer-events: none;
  filter: drop-shadow(0 1px 2px rgba(0, 0, 0, 0.45));
`;

const startTree: Node[] = [
  { s: "-", t: "Rysuj - Modelowanie brył, Pozycja początkowa" },
  { g: "|", s: "-", t: "Row 1" },
  { g: "||", s: "+", t: "Sub-Panel 1" },
  { g: "||", s: "+", t: "Sub-Panel 2" },
  { g: "||", s: "+", t: "Sub-Panel 3" },
];
const fullTree: Node[] = [
  { s: "-", t: "Rysuj - Modelowanie brył, Pozycja początkowa" },
  { g: "|", s: "-", t: "Row 1" },
  { g: "| ", s: "-", t: "Sub-Panel 1" },
  { g: "| |", s: "-", t: "Row 1" },
  { g: "| ||", s: "+", t: "Linia", icon: "line" },
  { g: "| |", s: "-", t: "Row 2" },
  { g: "| ||", s: "+", t: "Polilinia", icon: "polyline", on: true },
  { g: "| |", s: "-", t: "Row 3" },
  { g: "| | ", s: "+", t: "Okrąg", icon: "circle" },
  { g: "| ", s: "+", t: "Sub-Panel 2" },
];
const flyoutTree: Node[] = [
  { g: "| |||", s: ".", t: "Linia wzbogacona", icon: "rich" },
  { g: "| |", s: "-", t: "Row 2" },
  { g: "| ||", s: "-", t: "Polilinia", icon: "polyline" },
  { g: "| || ", s: ".", t: "Polilinia", icon: "polyline" },
  { g: "| || ", s: ".", t: "------" },
  { g: "| || ", s: ".", t: "Prostokąt", icon: "rect", on: true },
  { g: "| || ", s: ".", t: "Wielobok", icon: "polygon" },
  { g: "| || ", s: ".", t: "------" },
  { g: "| || ", s: ".", t: "Pierścień", icon: "ring" },
  { g: "| || ", s: ".", t: "------" },
];
const Tree = ({ nodes, h, up }: { nodes: Node[]; h: number; up?: number }) => (
  <Rows $h={h} $up={up}>{nodes.map((n, i) => <TreeRow key={i} {...n} fluid />)}</Rows>
);

const PanelLook = () => (
  <Callout $x={278} $y={30} $w={229} $h={138}>
    <Clip>
      <TabRow $inset={21} $low>
        <Tab $on>Pozycja początkowa</Tab><Tab>Wstaw</Tab><Tab>Import</Tab><Tab>Eksportuj</Tab><Tab>Dołącz</Tab>
      </TabRow>
      <RibbonBar>
        <Group $w={88}><GroupBody $pad={1}><DrawTools active="open" /></GroupBody><GroupName>Rysuj</GroupName></Group>
        <Group $w={106}><GroupBody $pad={1}><ModifyTools /></GroupBody><GroupName>Modyfikuj</GroupName></Group>
        <Group $w={80}><GroupBody><NoteTools /></GroupBody><GroupName>Adnotacje</GroupName></Group>
      </RibbonBar>
      <BackArea>
        <Buttons>
          <Icon name="apply" size={10} /><Icon name="page" size={10} /><Icon name="hatch" size={10} /><Icon name="dashes" size={10} /><Icon name="help" size={10} />
        </Buttons>
        <Canvas viewBox="0 0 36 12" aria-hidden="true">
          <path d="M0 3.500h36" stroke="#a01010" /><path d="M15.500 0v12" stroke="#18a018" /><path d="M13.500 1.500h4v4h-4z" fill="#444" stroke="#ddd" />
        </Canvas>
      </BackArea>
    </Clip>
    <Menu role="menu">
      <MenuItem type="button"><Icon name="polyline" size={10} />Polilinia</MenuItem>
      <Rule />
      <MenuItem type="button" $on><Icon name="rect" size={10} />Prostokąt</MenuItem>
      <MenuItem type="button"><Icon name="polygon" size={10} />Wielobok</MenuItem>
      <Rule />
      <MenuItem type="button"><Icon name="ring" size={10} />Pierścień</MenuItem>
      <Rule />
      <MenuItem type="button"><Icon name="poly3d" size={10} />Polilinia 3D</MenuItem>
    </Menu>
    <Tip role="tooltip"><strong><Icon name="rect" size={8} />Prostokąt</strong>Tworzy prostokątną polilinię:&nbsp; RECTANGLE</Tip>
  </Callout>
);

const App = () => (
  <>
    <GlobalStyle />
    <Desktop>
      <TitleBar>
        <Mark>
          <Svg $size={18} viewBox="0 0 36 36" aria-hidden="true">
            <path d="M4 5C18 6 21 20 7 29C10 20 9 12 4 5z" fill="#dff0e6" stroke="#5fae9a" strokeWidth="3" />
            <path d="M23 6l10 27c-5-6-10-7-16-3z" fill="#e6f2da" stroke="#7fb552" strokeWidth="3" />
            <path d="M7 29c5 3 8 2 10 1" fill="none" stroke="#4a9ab0" strokeWidth="3" />
          </Svg>
        </Mark>
        <Select label="Obszar roboczy" value="Drafting and Annotation" w={107} />
        <Icon name="newFile" /><Icon name="open" /><Icon name="openBlue" /><Icon name="save" /><Icon name="print" />
        <Icon name="undo" size={10} /><Caret /><Icon name="redo" size={10} /><Caret /><Icon name="more" size={10} />
        <DocTitle>DraftSight Enterprise Plus - [NONAME_0.dwg]</DocTitle>
      </TitleBar>
      <TabRow>
        <Tab $on>Pozycja początkowa</Tab>
        {["Wstaw", "Import", "Eksportuj", "Dołącz", "Adnotuj", "Arkusz"].map((t) => <Tab key={t}>{t}</Tab>)}
        <TabGap />
        <Tab>Powertools</Tab>
        <Tab>Toolbox</Tab>
      </TabRow>
      <Ribbon />
      <OptionsHeading>Pasek narzędzi Opcje</OptionsHeading>
      <Workspace>
        <Dock>
          <DockHint>Opcje programu</DockHint>
          <DockBody>
            <DockTabs><DockTab type="button"><Upright>Właściwości</Upright></DockTab></DockTabs>
            <DockStrip><Icon name="close" size={6} /><Icon name="pin" size={8} /><Upright>Właściwości</Upright></DockStrip>
          </DockBody>
        </Dock>
        <OptionsDialog />
      </Workspace>

      <Shade />

      <Callout $x={1} $y={30} $w={92} $h={55}><Pad><DrawTools /></Pad></Callout>
      <PanelLook />
      <Callout $x={47} $y={117} $w={187} $h={73}><Tree nodes={startTree} h={72} up={1} /></Callout>
      <Callout $x={187} $y={234} $w={518} $h={153}>
        <TreeView><Tree nodes={fullTree} h={143} /></TreeView>
        <TreeFoot />
        <ScrollMark />
      </Callout>
      <Callout $x={735} $y={165} $w={99} $h={69}>
        <Preview><DrawTools active="frame" /><PreviewName>Rysuj</PreviewName></Preview>
      </Callout>
      <Callout $x={755} $y={317} $w={198} $h={141}><Tree nodes={flyoutTree} h={143} up={2} /></Callout>

      <Arrows viewBox="0 0 1024 502" aria-hidden="true">
        <g fill="#2d339c">
          <path d="M100 55l141 4V53l31 12-32 11v-9L100 60z" />
          <path d="M166 195l15 15 11-5 5 27-29-12 4-7-11-14z" />
          <path d="M298 328l429-129-1-3 14 2-11 7-1-4-429 129z" />
          <path d="M711 341l10 10 8-3 17 32-32-16 3-7-10-10z" />
        </g>
      </Arrows>
      <Heading>WYGLĄD PANELU</Heading>
    </Desktop>
  </>
);

export default App;
